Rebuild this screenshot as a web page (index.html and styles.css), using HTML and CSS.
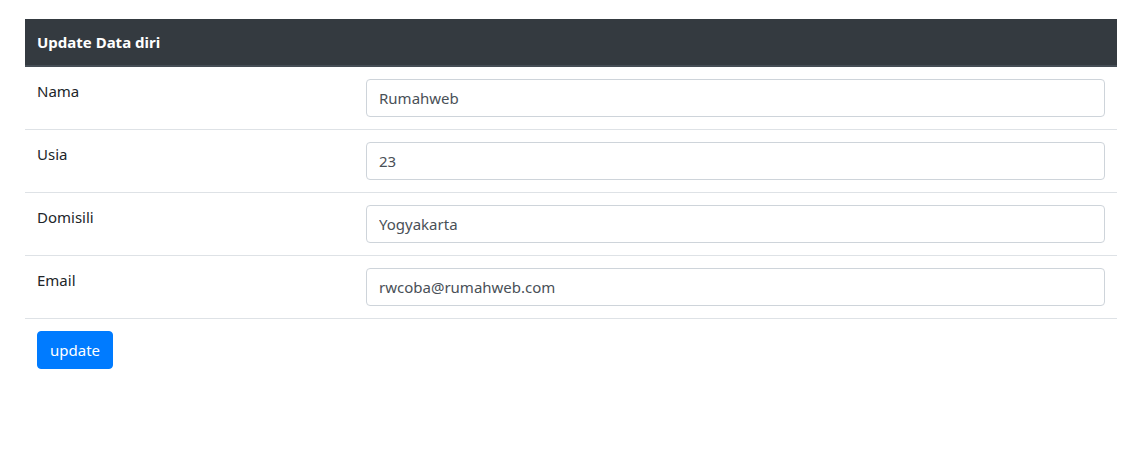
FILE: index.html
```html
<!DOCTYPE html>
<html>
<head>
<meta charset="utf-8">
<link rel="stylesheet" href="styles.css">
</head>
<body>
<div class="wrap">
  <table class="tbl">
    <thead>
      <tr><th colspan="2">Update Data diri</th></tr>
    </thead>
    <tbody>
      <tr><td class="lbl">Nama</td><td><input class="ctl" type="text" value="Rumahweb"></td></tr>
      <tr><td class="lbl">Usia</td><td><input class="ctl" type="text" value="23"></td></tr>
      <tr><td class="lbl">Domisili</td><td><input class="ctl" type="text" value="Yogyakarta"></td></tr>
      <tr><td class="lbl">Email</td><td><input class="ctl" type="text" value="rwcoba@rumahweb.com"></td></tr>
      <tr class="last"><td colspan="2"><button class="btn">update</button></td></tr>
    </tbody>
  </table>
</div>
</body>
</html>
```
FILE: styles.css
```css
html, body { margin: 0; padding: 0; background: #fff; }
body {
  font-family: "Segoe UI", "Noto Sans", "Open Sans", sans-serif;
  font-size: 15px;
  line-height: 24px;
  color: #212529;
}
.wrap { padding: 19px 12px 0 25px; }
.tbl { width: 100%; border-collapse: collapse; }
.tbl th {
  background: #343a40;
  color: #fff;
  text-align: left;
  font-weight: 700;
  padding: 11px 12px 11px;
  border-bottom: 2px solid #454d55;
}
.tbl td {
  padding: 12px;
  vertical-align: top;
  border-top: 1px solid #dee2e6;
}
.tbl thead + tbody tr:first-child td { border-top: none; }
.lbl { width: 305px; }
.ctl {
  display: block;
  box-sizing: border-box;
  width: 100%;
  height: 38px;
  padding: 6px 12px;
  font: inherit;
  color: #495057;
  border: 1px solid #ced4da;
  border-radius: 4px;
  background: #fff;
  margin: 0;
}
.btn {
  font: inherit;
  color: #fff;
  background: #007bff;
  border: 1px solid #007bff;
  border-radius: 4px;
  padding: 6px 12px;
  height: 38px;
  margin: 0;
}
```
